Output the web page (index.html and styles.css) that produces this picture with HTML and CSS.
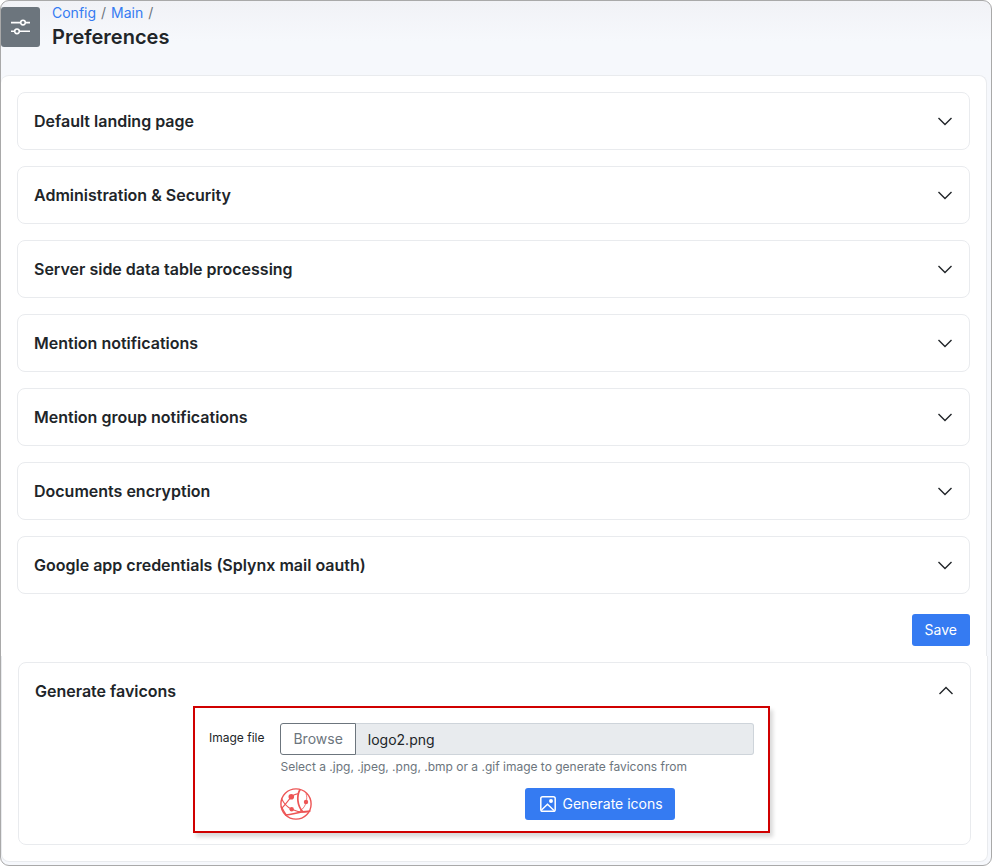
FILE: index.html
```
<!DOCTYPE html>
<html lang="en">

<head>
    <meta charset="utf-8">
    <meta name="viewport" content="width=device-width, initial-scale=1">
    <title>Preferences</title>
    <link rel="stylesheet" href="styles.css">
</head>

<body>
    <!-- Chevron shared by all cards -->
    <svg class="sprite" aria-hidden="true">
        <symbol id="chevron" viewBox="0 0 16 16">
            <path d="M1.5 5 8 11.5 14.5 5" fill="none" stroke="currentColor" stroke-width="1.4" />
        </symbol>
    </svg>

    <div class="app">
        <header class="page-header">
            <div class="header-icon">
                <svg width="20" height="20" viewBox="0 0 20 20" fill="none" stroke="currentColor" stroke-width="1.6">
                    <path d="M0 5.600h9.600M14.400 5.600h4.600M0 14.300h3.600M8.400 14.300h10.600" />
                    <circle cx="12" cy="5.600" r="2.300" />
                    <circle cx="6" cy="14.300" r="2.300" />
                </svg>
            </div>
            <div>
                <nav class="breadcrumb" aria-label="Breadcrumb">
                    <a href="#">Config</a><span>/</span><a href="#">Main</a><span>/</span>
                </nav>
                <h1>Preferences</h1>
            </div>
        </header>

        <main>
            <div class="panel panel-top">
                <section class="card">
                    <h2><button type="button" class="card-toggle" aria-expanded="false">Default landing page <svg class="chevron"><use href="#chevron" /></svg></button></h2>
                </section>
                <section class="card">
                    <h2><button type="button" class="card-toggle" aria-expanded="false">Administration &amp; Security <svg class="chevron"><use href="#chevron" /></svg></button></h2>
                </section>
                <section class="card">
                    <h2><button type="button" class="card-toggle" aria-expanded="false">Server side data table processing <svg class="chevron"><use href="#chevron" /></svg></button></h2>
                </section>
                <section class="card">
                    <h2><button type="button" class="card-toggle" aria-expanded="false">Mention notifications <svg class="chevron"><use href="#chevron" /></svg></button></h2>
                </section>
                <section class="card">
                    <h2><button type="button" class="card-toggle" aria-expanded="false">Mention group notifications <svg class="chevron"><use href="#chevron" /></svg></button></h2>
                </section>
                <section class="card">
                    <h2><button type="button" class="card-toggle" aria-expanded="false">Documents encryption <svg class="chevron"><use href="#chevron" /></svg></button></h2>
                </section>
                <section class="card">
                    <h2><button type="button" class="card-toggle" aria-expanded="false">Google app credentials (Splynx mail oauth) <svg class="chevron"><use href="#chevron" /></svg></button></h2>
                </section>
                <div class="actions">
                    <button type="button" class="btn">Save</button>
                </div>
            </div>

            <div class="panel panel-bottom">
                <section class="card card-open">
                    <h2><button type="button" class="card-toggle" aria-expanded="true">Generate favicons <svg class="chevron"><use href="#chevron" /></svg></button></h2>
                    <form class="favicon-form">
                        <label class="field-label" for="image-file">Image file</label>
                        <div class="field">
                            <div class="file-group">
                                <button type="button" class="browse">Browse</button>
                                <input id="image-file" type="text" value="logo2.png" readonly aria-describedby="image-help">
                            </div>
                            <p id="image-help" class="help">Select a .jpg, .jpeg, .png, .bmp or a .gif image to generate favicons from</p>
                            <div class="preview-row">
                                <svg class="logo" viewBox="0 0 32 32" fill="none" stroke="currentColor" aria-label="Current favicon" role="img">
                                    <circle cx="16" cy="16" r="15.100" stroke-width="1.400" />
                                    <path d="M20 1.500C16.500 8 17 18 23 24" stroke-width="1.700" />
                                    <path d="M1.500 10.500C4 16 7 19 11.700 21.300S23 25 30 23.500" stroke-width="1.100" />
                                    <path d="M26 14C25.500 17.500 23.500 20.500 20 23M26 14C27 11 27 8.500 26 5.500" stroke-width=".8" />
                                    <path d="M5 27C12 27.500 17 23.500 30.500 23" stroke-width="1.600" />
                                    <path d="M1.500 20.500C5 17 8 13 11.300 8.700C13 7 16 6 19 5.500" stroke-width="1.100" />
                                    <path d="M1.200 18.500C3 22 4 24 6.500 27.500" stroke-width="1.300" />
                                    <g fill="currentColor" stroke="none">
                                        <circle cx="11.300" cy="8.800" r="2.800" />
                                        <circle cx="26" cy="14" r="2.200" />
                                        <circle cx="11.700" cy="21.300" r="2.200" />
                                    </g>
                                </svg>
                                <button type="submit" class="btn btn-icon">
                                    <svg width="16" height="16" viewBox="0 0 16 16" fill="none" stroke="currentColor" stroke-width="1.500">
                                        <rect x=".8" y=".8" width="14.400" height="14.400" rx="1.800" />
                                        <circle cx="11" cy="5" r="1.200" fill="currentColor" />
                                        <path d="M1.500 14 7.500 8.200 14 14.500" />
                                    </svg>
                                    Generate icons
                                </button>
                            </div>
                        </div>
                    </form>
                </section>
            </div>
        </main>
    </div>
</body>

</html>
```
FILE: styles.css
```
* {
    box-sizing: border-box;
}

body {
    margin: 0;
    font-family: Inter, "Liberation Sans", sans-serif;
    font-size: 14px;
    line-height: 20px;
    color: #212529;
    background: #fff;
}

button, input {
    font: inherit;
}

h1, h2, p {
    margin: 0;
}

.sprite {
    display: none;
}

.app {
    min-height: 100vh;
    padding-bottom: 3px;
    border: 1px solid #a9a9a9;
    border-radius: 9px;
    background: linear-gradient(#f1f2f6, #f6f8fc 40px);
    overflow: hidden;
}

/* Header */
.page-header {
    display: flex;
    gap: 12px;
    height: 74px;
}

.header-icon {
    display: flex;
    align-items: center;
    justify-content: center;
    width: 39px;
    height: 40px;
    margin-top: 6px;
    border-radius: 3px;
    background: #6c757d;
    color: #fff;
}

.breadcrumb {
    display: flex;
    gap: 5px;
    margin-top: 2px;
    color: #6c757d;
}

.breadcrumb a {
    color: #357bf2;
    text-decoration: none;
}

h1 {
    font-size: 20px;
    font-weight: 600;
    line-height: 28px;
}

/* Panels */
.panel {
    padding: 16px;
    background: #fff;
    border: 1px solid #e9ebee;
}

.panel-top {
    display: flex;
    flex-direction: column;
    gap: 16px;
    margin-right: 4px;
    padding-bottom: 10px;
    border-left: 0;
    border-bottom: 0;
    border-radius: 8px 8px 0 0;
}

.panel-bottom {
    margin-right: 3px;
    padding-top: 6px;
    border-top: 0;
    border-radius: 0 0 8px 8px;
}

.card {
    border: 1px solid #e9ebee;
    border-radius: 8px;
}

.card h2 {
    font-size: 16px;
    font-weight: 600;
    line-height: 24px;
}

.card-toggle {
    display: flex;
    align-items: center;
    justify-content: space-between;
    width: 100%;
    padding: 16px;
    border: 0;
    background: none;
    color: inherit;
    text-align: left;
    cursor: pointer;
}

.chevron {
    width: 16px;
    height: 16px;
    flex: none;
}

.card-toggle[aria-expanded="true"] .chevron {
    transform: rotate(180deg);
}

.actions {
    display: flex;
    justify-content: flex-end;
    padding-top: 4px;
}

.btn {
    height: 32px;
    padding: 0 13px;
    border: 0;
    border-radius: 3px;
    background: #357bf2;
    color: #fff;
    cursor: pointer;
}

.btn-icon {
    display: flex;
    align-items: center;
    gap: 6px;
    padding: 0 12px 0 15px;
}

/* Favicon form */
.card-open {
    padding-bottom: 11px;
}

.card-open h2 {
    margin-bottom: -13px;
}

.favicon-form {
    display: flex;
    gap: 16px;
    margin: 0 200px 0 174px;
    padding: 15px 14px 11px;
    border: 2px solid #d00000;
    background: #fff;
    box-shadow: 3px 4px 4px rgba(0, 0, 0, 0.15);
    position: relative;
}

.field-label {
    flex: none;
    padding-top: 5px;
    font-size: 12px;
}

.field {
    flex: 1;
    min-width: 0;
}

.file-group {
    display: flex;
    height: 32px;
}

.browse {
    padding: 0 12px;
    border: 1px solid #6c757d;
    border-radius: 3px 0 0 3px;
    background: #fff;
    color: #6c757d;
    cursor: pointer;
}

.file-group input {
    flex: 1;
    min-width: 0;
    padding: 2px 12px 0;
    border: 1px solid #ced4da;
    border-left: 0;
    border-radius: 0 3px 3px 0;
    background: #e8ebee;
    color: #212529;
}

.help {
    padding-top: 2px;
    font-size: 12px;
    color: #6c757d;
}

.preview-row {
    display: grid;
    grid-template-columns: 245px auto;
    justify-content: start;
    margin-top: 11px;
}

.logo {
    width: 32px;
    height: 32px;
    color: #ed5555;
}
```
